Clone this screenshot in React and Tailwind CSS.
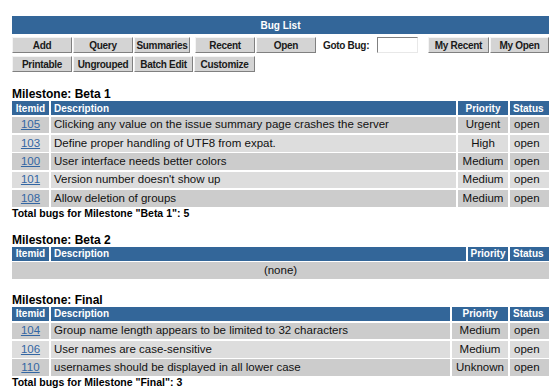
import React from "react";

const beta1 = [
  { id: "105", desc: "Clicking any value on the issue summary page crashes the server", priority: "Urgent", status: "open" },
  { id: "103", desc: "Define proper handling of UTF8 from expat.", priority: "High", status: "open" },
  { id: "100", desc: "User interface needs better colors", priority: "Medium", status: "open" },
  { id: "101", desc: "Version number doesn't show up", priority: "Medium", status: "open" },
  { id: "108", desc: "Allow deletion of groups", priority: "Medium", status: "open" },
];

const finalBugs = [
  { id: "104", desc: "Group name length appears to be limited to 32 characters", priority: "Medium", status: "open" },
  { id: "106", desc: "User names are case-sensitive", priority: "Medium", status: "open" },
  { id: "110", desc: "usernames should be displayed in all lower case", priority: "Unknown", status: "open" },
];

function Button({ label, width }) {
  return (
    <div
      className={`flex h-full items-center justify-center border border-t-[#f4f4f4] border-l-[#f4f4f4] border-r-[#808080] border-b-[#808080] bg-[#d4d4d4] text-[10px] font-bold tracking-[-0.3px] text-[#1a1a1a] ${width}`}
    >
      {label}
    </div>
  );
}

function HeadCell({ children, align = "justify-center" }) {
  return (
    <div className={`flex h-[14px] items-center bg-[#336699] px-[3px] text-[10px] font-bold text-white ${align}`}>
      {children}
    </div>
  );
}

function Milestone({ name, bugs, cols, total, className = "" }) {
  return (
    <div className={className}>
      <div className="h-[14px] text-[12px] font-bold leading-[14px] text-black">Milestone: {name}</div>
      <div className={`grid gap-x-[2px] gap-y-[1.67px] ${cols}`}>
        <HeadCell>Itemid</HeadCell>
        <HeadCell align="justify-start">Description</HeadCell>
        <HeadCell>Priority</HeadCell>
        <HeadCell align="justify-start">Status</HeadCell>
        {bugs.length === 0 && (
          <div className="col-span-4 flex h-[16.67px] items-center justify-center bg-[#cccccc] text-[11.5px] text-[#111]">
            (none)
          </div>
        )}
        {bugs.map((bug, index) => {
          const bg = index % 2 === 0 ? "bg-[#cccccc]" : "bg-[#dddddd]";
          return (
            <React.Fragment key={bug.id}>
              <div className={`flex h-[16.67px] items-center justify-center text-[11.5px] ${bg}`}>
                <span className="text-[#3366a3] underline">{bug.id}</span>
              </div>
              <div className={`flex h-[16.67px] items-center overflow-hidden whitespace-nowrap pl-[3px] text-[11.5px] text-[#111] ${bg}`}>
                {bug.desc}
              </div>
              <div className={`flex h-[16.67px] items-center justify-center text-[11.5px] text-[#111] ${bg}`}>
                {bug.priority}
              </div>
              <div className={`flex h-[16.67px] items-center pl-[4px] text-[11.5px] text-[#111] ${bg}`}>
                {bug.status}
              </div>
            </React.Fragment>
          );
        })}
      </div>
      {total && (
        <div className="h-[12px] text-[10.5px] font-bold leading-[12px] text-black">
          Total bugs for Milestone "{name}": {total}
        </div>
      )}
    </div>
  );
}

export default function App() {
  return (
    <div
      className="h-[392px] w-[560px] overflow-hidden bg-white pt-[16px] pl-[12px] pr-[11px]"
      style={{ fontFamily: '"Liberation Sans", Arial, sans-serif' }}
    >
      <div className="flex h-[18px] items-center justify-center bg-[#336699] text-[10px] font-bold text-white">
        Bug List
      </div>

      <div className="mt-[3px] flex h-[16px] items-stretch">
        <Button label="Add" width="w-[60px]" />
        <div className="w-[1px]" />
        <Button label="Query" width="w-[60px]" />
        <div className="w-[1px]" />
        <Button label="Summaries" width="w-[56px]" />
        <div className="w-[5px]" />
        <Button label="Recent" width="w-[60px]" />
        <div className="w-[1px]" />
        <Button label="Open" width="w-[60px]" />
        <div className="ml-[7px] flex w-[54px] items-center text-[10px] font-bold tracking-[-0.3px] text-[#1a1a1a]">
          Goto Bug:
        </div>
        <div className="w-[41px] border border-t-[#808080] border-l-[#808080] border-r-[#e8e8e8] border-b-[#e8e8e8] bg-white" />
        <div className="w-[10px]" />
        <Button label="My Recent" width="w-[61px]" />
        <div className="w-[1px]" />
        <Button label="My Open" width="w-[59px]" />
      </div>

      <div className="mt-[3px] flex h-[16px] items-stretch">
        <Button label="Printable" width="w-[60px]" />
        <div className="w-[1px]" />
        <Button label="Ungrouped" width="w-[60px]" />
        <div className="w-[1px]" />
        <Button label="Batch Edit" width="w-[59px]" />
        <div className="w-[1px]" />
        <Button label="Customize" width="w-[61px]" />
      </div>

      <Milestone className="mt-[15px]" name="Beta 1" bugs={beta1} cols="grid-cols-[37px_1fr_50px_39px]" total="5" />
      <Milestone className="mt-[14px]" name="Beta 2" bugs={[]} cols="grid-cols-[37px_1fr_40px_39px]" />
      <Milestone className="mt-[14px]" name="Final" bugs={finalBugs} cols="grid-cols-[37px_1fr_56px_39px]" total="3" />
    </div>
  );
}
